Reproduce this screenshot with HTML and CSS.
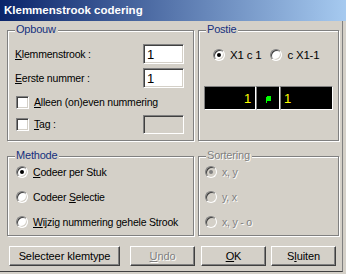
FILE: index.html
```html
<!DOCTYPE html>
<html lang="nl">
<head>
    <meta charset="UTF-8">
    <title>Klemmenstrook codering</title>
    <link rel="stylesheet" href="styles.css">
</head>
<body>
    <div class="window">
        <div class="titlebar">Klemmenstrook codering</div>
        <div class="client">
            <div class="row top-row">
                <div class="group opbouw">
                    <span class="legend">Opbouw</span>
                    <div class="line">
                        <span><u>K</u>lemmenstrook :</span>
                        <span class="field">1</span>
                    </div>
                    <div class="line">
                        <span><u>E</u>erste nummer :</span>
                        <span class="field">1</span>
                    </div>
                    <div class="line check-line">
                        <span class="check"></span>
                        <span><u>A</u>lleen (on)even nummering</span>
                    </div>
                    <div class="line check-line">
                        <span class="check"></span>
                        <span><u>T</u>ag :</span>
                        <span class="field disabled"></span>
                    </div>
                </div>
                <div class="group postie">
                    <span class="legend">Postie</span>
                    <div class="radios-inline">
                        <span class="opt"><span class="radio checked"></span>X1 c 1</span>
                        <span class="opt"><span class="radio"></span>c X1-1</span>
                    </div>
                    <div class="display">
                        <span class="lcd lcd-left">1</span>
                        <span class="lcd lcd-mid">
                            <svg width="5" height="7" viewBox="0 0 5 7">
                                <rect x="0" y="1" width="1" height="6" fill="#00ff00"/>
                                <rect x="1" y="0" width="4" height="5" fill="#00ff00"/>
                            </svg>
                        </span>
                        <span class="lcd lcd-right">1</span>
                    </div>
                </div>
            </div>
            <div class="row mid-row">
                <div class="group methode">
                    <span class="legend">Methode</span>
                    <div class="opt-line"><span class="radio checked"></span><span><u>C</u>odeer per Stuk</span></div>
                    <div class="opt-line"><span class="radio"></span><span>Codeer <u>S</u>electie</span></div>
                    <div class="opt-line"><span class="radio"></span><span><u>W</u>ijzig nummering gehele Strook</span></div>
                </div>
                <div class="group sortering">
                    <span class="legend off">Sortering</span>
                    <div class="opt-line off"><span class="radio checked"></span><span>x, y</span></div>
                    <div class="opt-line off"><span class="radio"></span><span>y, x</span></div>
                    <div class="opt-line off"><span class="radio"></span><span>x, y - o</span></div>
                </div>
            </div>
            <div class="buttons">
                <button class="btn btn-wide">Selecteer klemtype</button>
                <button class="btn btn-undo off"><u>U</u>ndo</button>
                <button class="btn btn-ok"><u>O</u>K</button>
                <button class="btn btn-close">S<u>l</u>uiten</button>
            </div>
        </div>
    </div>
</body>
</html>
```

FILE: styles.css
```css
body {
    margin: 0;
    width: 346px;
    height: 274px;
    background-color: #d4d0c8;
    font-family: "Liberation Sans", Arial, sans-serif;
    font-size: 10.5px;
    letter-spacing: -0.2px;
    color: #000;
    overflow: hidden;
}
.window {
    width: 343px;
    height: 272px;
    box-sizing: border-box;
    border-right: 1px solid #808080;
    border-bottom: 1px solid #404040;
}
.titlebar {
    width: 346px;
    height: 21px;
    box-sizing: border-box;
    padding: 4px 0 0 4px;
    background: linear-gradient(to right, #0a246a, #a6caf0);
    color: #fff;
    font-weight: bold;
    font-size: 11.5px;
    letter-spacing: 0;
}
.client {
    padding: 9px 0 0 7px;
}
.row {
    display: flex;
    gap: 4px;
}
.top-row {
    height: 112px;
}
.mid-row {
    margin-top: 14px;
    height: 81px;
}
.group {
    position: relative;
    box-sizing: border-box;
    border: 1px solid #808080;
    box-shadow: inset 1px 1px 0 #fff, 1px 1px 0 #fff;
    height: 111px;
}
.mid-row .group {
    height: 80px;
}
.legend {
    position: absolute;
    top: -8px;
    left: 7px;
    padding: 0 2px 0 1px;
    background-color: #d4d0c8;
    color: #15307e;
    font-size: 11px;
}
.legend.off, .off, .btn.off {
    color: #808080;
    text-shadow: 1px 1px 0 #fff;
}
.opbouw, .methode {
    width: 187px;
    padding: 13px 9px 0 7px;
}
.postie, .sortering {
    width: 141px;
}
.line {
    display: flex;
    align-items: center;
    height: 20px;
    margin-bottom: 4px;
}
.check-line {
    margin-top: 2px;
    margin-bottom: 2px;
}
.field {
    margin-left: auto;
    width: 41px;
    height: 20px;
    box-sizing: border-box;
    padding: 2px 0 0 3px;
    background-color: #fff;
    border: 1px solid;
    border-color: #808080 #fff #fff #808080;
    box-shadow: inset 1px 1px 0 #404040, inset -1px -1px 0 #d4d0c8;
    font-size: 13px;
}
.field.disabled {
    height: 19px;
    background-color: #d4d0c8;
}
.check {
    width: 13px;
    height: 13px;
    box-sizing: border-box;
    margin: 0 5px 0 1px;
    background-color: #fff;
    border: 1px solid;
    border-color: #808080 #fff #fff #808080;
    box-shadow: inset 1px 1px 0 #404040, inset -1px -1px 0 #d4d0c8;
}
.radio {
    display: inline-flex;
    align-items: center;
    justify-content: center;
    width: 12px;
    height: 12px;
    box-sizing: border-box;
    border-radius: 50%;
    background-color: #fff;
    border: 1px solid;
    border-color: #808080 #fff #fff #808080;
    box-shadow: inset 1px 1px 0 #404040, inset -1px -1px 0 #d4d0c8;
    margin-right: 5px;
    flex-shrink: 0;
}
.radio.checked::after {
    content: "";
    width: 4px;
    height: 4px;
    border-radius: 50%;
    background-color: #000;
}
.off .radio {
    background-color: #d4d0c8;
}
.off .radio.checked::after {
    background-color: #808080;
}
.radios-inline {
    display: flex;
    align-items: center;
    gap: 9px;
    padding: 17px 0 0 14px;
    height: 13px;
}
.opt {
    display: flex;
    align-items: center;
    font-size: 11.5px;
}
.display {
    display: flex;
    margin: 25px 0 0 5px;
}
.lcd {
    height: 24px;
    box-sizing: border-box;
    background-color: #000;
    border: 1px solid;
    border-color: #808080 #fff #fff #808080;
    color: #ffff00;
    font-size: 13px;
    display: flex;
    align-items: center;
}
.lcd-left {
    width: 52px;
    justify-content: flex-end;
    padding-right: 4px;
}
.lcd-mid {
    width: 24px;
    justify-content: center;
    padding-top: 2px;
}
.lcd-right {
    width: 53px;
    padding-left: 3px;
}
.methode {
    padding: 5px 9px 0 8px;
}
.sortering {
    padding: 5px 0 0 6px;
}
.opt-line {
    display: flex;
    align-items: center;
    height: 20px;
    margin-bottom: 5px;
    white-space: nowrap;
}
.buttons {
    display: flex;
    margin: 9px 0 0 2px;
}
.btn {
    height: 20px;
    box-sizing: border-box;
    padding: 0;
    font-family: "Liberation Sans", Arial, sans-serif;
    font-size: 11px;
    letter-spacing: -0.1px;
    background-color: #d4d0c8;
    border: 1px solid;
    border-color: #fff #404040 #404040 #fff;
    box-shadow: inset -1px -1px 0 #808080;
    color: #000;
}
.btn-wide {
    width: 111px;
}
.btn-undo {
    width: 65px;
    margin-left: 10px;
}
.btn-ok {
    width: 65px;
    margin-left: 6px;
}
.btn-close {
    width: 65px;
    margin-left: 5px;
}
```
